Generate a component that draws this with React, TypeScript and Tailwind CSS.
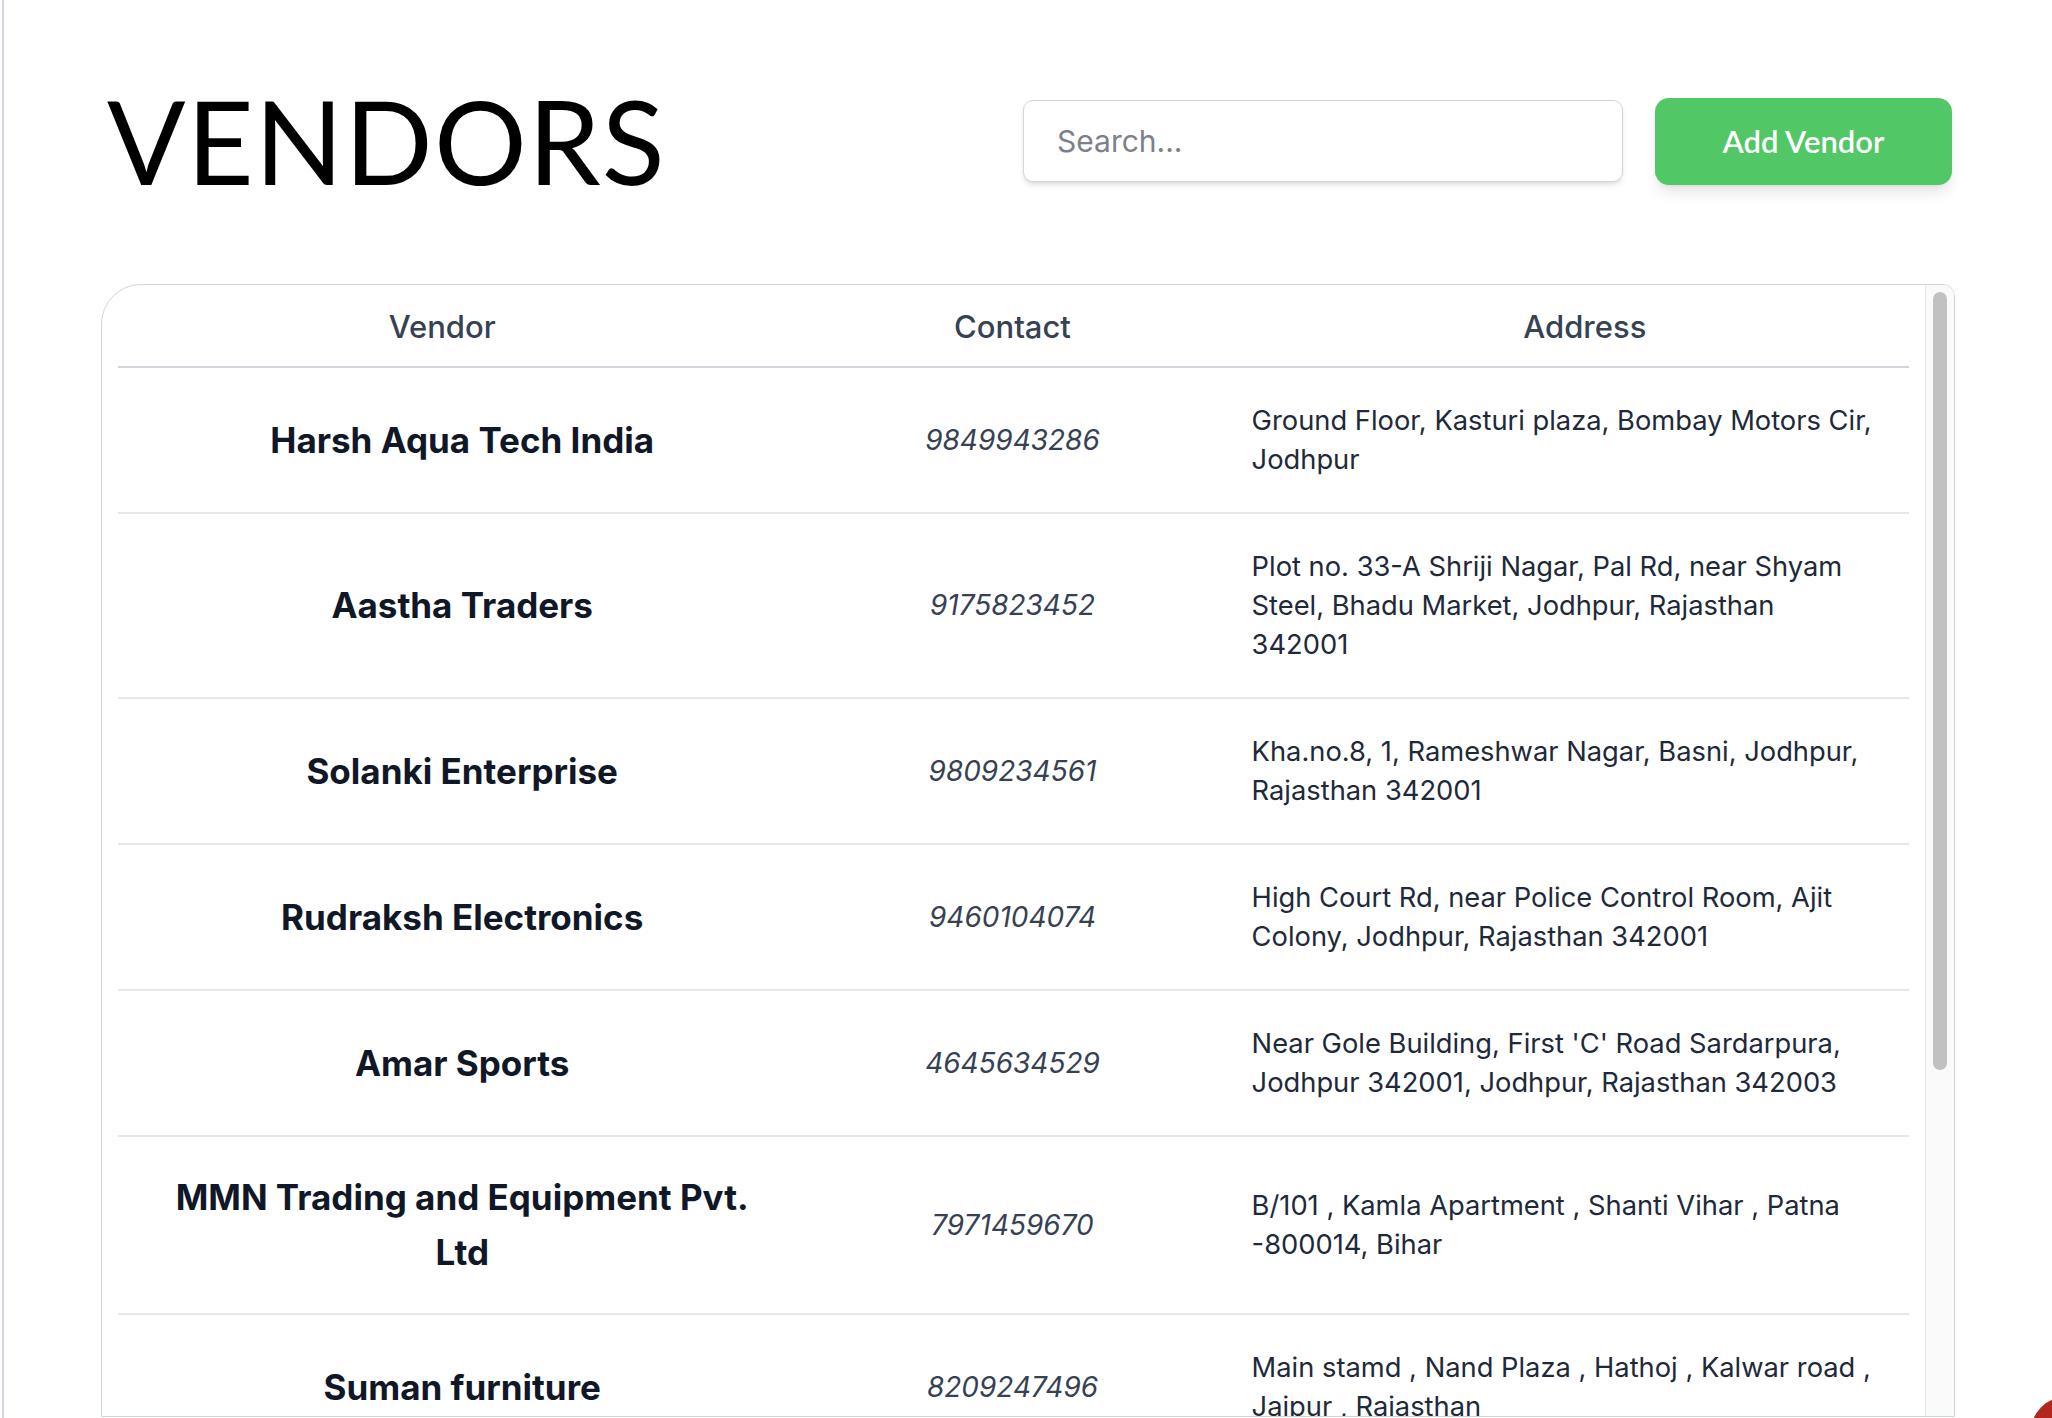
import React, { useState } from 'react';

type Vendor = { name: string; contact: string; address: string };

const vendors: Vendor[] = [
  {
    name: 'Harsh Aqua Tech India',
    contact: '9849943286',
    address: 'Ground Floor, Kasturi plaza, Bombay Motors Cir, Jodhpur',
  },
  {
    name: 'Aastha Traders',
    contact: '9175823452',
    address: 'Plot no. 33-A Shriji Nagar, Pal Rd, near Shyam Steel, Bhadu Market, Jodhpur, Rajasthan 342001',
  },
  {
    name: 'Solanki Enterprise',
    contact: '9809234561',
    address: 'Kha.no.8, 1, Rameshwar Nagar, Basni, Jodhpur, Rajasthan 342001',
  },
  {
    name: 'Rudraksh Electronics',
    contact: '9460104074',
    address: 'High Court Rd, near Police Control Room, Ajit Colony, Jodhpur, Rajasthan 342001',
  },
  {
    name: 'Amar Sports',
    contact: '4645634529',
    address: "Near Gole Building, First 'C' Road Sardarpura, Jodhpur 342001, Jodhpur, Rajasthan 342003",
  },
  {
    name: 'MMN Trading and Equipment Pvt. Ltd',
    contact: '7971459670',
    address: 'B/101 , Kamla Apartment , Shanti Vihar , Patna -800014, Bihar',
  },
  {
    name: 'Suman furniture',
    contact: '8209247496',
    address: 'Main stamd , Nand Plaza , Hathoj , Kalwar road , Jaipur , Rajasthan',
  },
];

export default function App() {
  const [query, setQuery] = useState('');

  const filtered = vendors.filter((v) =>
    v.name.toLowerCase().includes(query.toLowerCase())
  );

  return (
    <div className="flex h-screen overflow-hidden bg-white font-['Inter',sans-serif]">
      <div className="ml-[2px] w-[2px] shrink-0 bg-gray-300" />

      <main className="flex-1 pl-[97px] pr-[97px]">
        {/* header */}
        <div className="flex items-center justify-between pt-[83px]">
          <h1 className="ml-[6px] font-['Lato',sans-serif] text-[116px] font-normal leading-none tracking-[0.01em] text-black">
            VENDORS
          </h1>
          <div className="mr-[3px] flex items-center gap-8">
            <input
              value={query}
              onChange={(e) => setQuery(e.target.value)}
              placeholder="Search..."
              className="h-[82px] w-[600px] rounded-[10px] border border-gray-300 bg-white pl-[33px] text-[30px] text-gray-800 shadow-md outline-none placeholder:text-[#7d8088]"
            />
            <button className="h-[87px] w-[297px] rounded-[14px] bg-[#51c765] font-['Lato',sans-serif] text-[31px] font-semibold text-white shadow-lg">
              Add Vendor
            </button>
          </div>
        </div>

        {/* table with its scroll track */}
        <div className="mt-[85px] flex h-[1133px] overflow-hidden rounded-tl-[40px] rounded-tr-[12px] border border-gray-300">
          <div className="flex-1 overflow-hidden px-[16px]">
            <table className="w-full table-fixed border-collapse">
              <colgroup>
                <col className="w-[688px]" />
                <col className="w-[412px]" />
                <col className="w-[690px]" />
              </colgroup>
              <thead>
                <tr className="border-b-2 border-gray-300">
                  <th className="h-[82px] pr-[40px] pt-[4px] text-center text-[31px] font-medium text-gray-700">
                    Vendor
                  </th>
                  <th className="h-[82px] pt-[4px] text-center text-[31px] font-medium text-gray-700">
                    Contact
                  </th>
                  <th className="h-[82px] pl-[42px] pt-[4px] text-center text-[31px] font-medium text-gray-700">
                    Address
                  </th>
                </tr>
              </thead>
              <tbody>
                {filtered.map((v, i) => (
                  <tr key={i} className="border-b-2 border-gray-200">
                    <td className="px-[44px] py-[33px] text-center align-middle text-[35px] font-bold leading-[55px] text-gray-900">
                      {v.name}
                    </td>
                    <td className="py-[33px] text-center align-middle text-[28px] italic leading-[39px] text-gray-700">
                      {v.contact}
                    </td>
                    <td className="py-[33px] pl-[33px] pr-[32px] text-left align-middle text-[27.3px] leading-[39px] text-gray-800">
                      {v.address}
                    </td>
                  </tr>
                ))}
              </tbody>
            </table>
          </div>

          <div className="w-[29px] shrink-0 border-l border-[#e6e6e6] bg-[#fafafa] px-[7px] pt-[7px]">
            <div className="h-[778px] rounded-full bg-[#c1c1c1]" />
          </div>
        </div>
      </main>

      {/* floating button peeking in at the corner */}
      <div className="fixed bottom-[-54px] right-[-54px] h-[76px] w-[76px] rounded-full bg-[#b3261e]" />
    </div>
  );
}
